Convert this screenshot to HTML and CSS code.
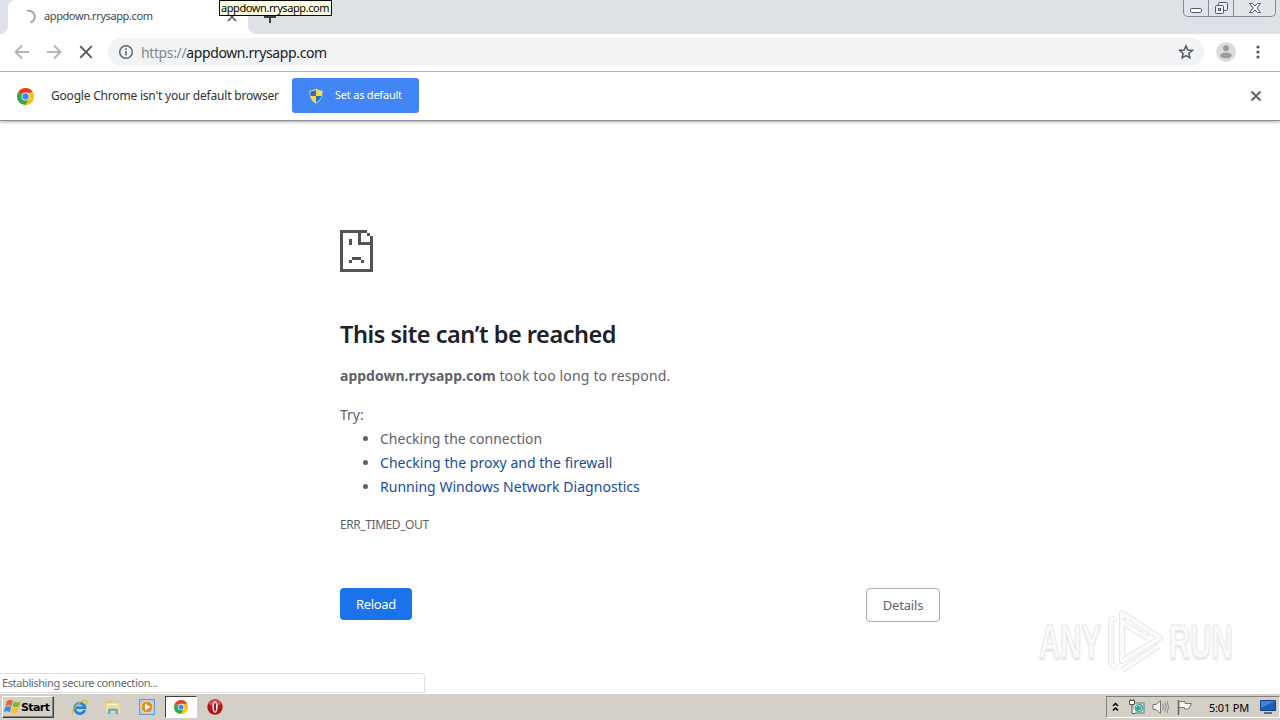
FILE: index.html
```
<!DOCTYPE html>
<html lang="en">
<head>
<meta charset="utf-8">
<title>appdown.rrysapp.com</title>
<link rel="stylesheet" href="styles.css">
</head>
<body>
<svg class="defs" width="0" height="0">
	<symbol id="chrome" viewBox="0 0 16 16">
		<circle cx="8" cy="8" r="8" fill="#fbc116"/>
		<path d="M8 8L1.1 4A8 8 0 0 1 14.9 4z" fill="#e33b2e"/>
		<path d="M1.1 4A8 8 0 0 0 8 16L11.4 10L8 8z" fill="#2da94f"/>
		<path d="M8 4.2H15A8 8 0 0 1 8 16L11.4 9.8z" fill="#fbc116"/>
		<circle cx="8" cy="8" r="3.7" fill="#fff"/>
		<circle cx="8" cy="8" r="3" fill="#4286f5"/>
	</symbol>
</svg>

<div class="browser">
	<div class="tabstrip">
		<div class="edge"></div>
		<div class="tab">
			<svg class="spinner" width="16" height="16" viewBox="0 0 16 16"><path d="M7 2A6 6 0 0 1 10.5 13.5" fill="none" stroke="#a4a7ab" stroke-width="2"/></svg>
			<span class="tab-title">appdown.rrysapp.com</span>
			<svg class="tab-close" width="10" height="10" viewBox="0 0 10 10"><path d="M1 1l8 8M9 1l-8 8" stroke="#5f6368" stroke-width="1.7"/></svg>
		</div>
		<div class="newtab"><svg width="12" height="12" viewBox="0 0 12 12"><path d="M6 0v12M0 6h12" stroke="#3c4043" stroke-width="2"/></svg></div>
		<div class="wincontrols">
			<span class="wbtn min"><svg width="14" height="14" viewBox="0 0 14 14"><rect x="1.5" y="7.5" width="11" height="4" rx="1" fill="#fff" stroke="#535666"/></svg></span>
			<span class="wbtn max"><svg width="14" height="14" viewBox="0 0 14 14"><g fill="#eff0f3" stroke="#535666"><rect x="4.500" y="1.500" width="9" height="8" rx="1"/><rect x="1.500" y="4.500" width="8" height="8" rx="1"/><rect x="4.500" y="7.500" width="2" height="2"/></g></svg></span>
			<span class="wbtn close"><svg width="14" height="14" viewBox="0 0 14 14"><path d="M1.500 2.500h3l2.500 2.500 2.500-2.500h3L9 7l3.500 4.500h-3L7 9l-2.500 2.500h-3L5 7z" fill="#fff" stroke="#535666"/></svg></span>
		</div>
		<div class="tooltip">appdown.rrysapp.com</div>
	</div>

	<div class="toolbar">
		<svg width="16" height="16" viewBox="0 0 16 16"><path d="M15 8H2M8 1.500L1.500 8L8 14.500" fill="none" stroke="#b3b5b7" stroke-width="1.900"/></svg>
		<svg width="16" height="16" viewBox="0 0 16 16"><path d="M1 8h13M8 1.500L14.500 8L8 14.500" fill="none" stroke="#b3b5b7" stroke-width="1.900"/></svg>
		<svg width="16" height="16" viewBox="0 0 16 16"><path d="M2.200 2.200l11.600 11.600M13.800 2.200L2.200 13.800" stroke="#55585c" stroke-width="1.900"/></svg>
		<div class="omnibox">
			<svg width="16" height="16" viewBox="0 0 16 16"><circle cx="8" cy="8" r="6.300" fill="none" stroke="#5f6368" stroke-width="1.500"/><path d="M8 7v4.500M8 4.300v1.700" stroke="#5f6368" stroke-width="1.600"/></svg>
			<span class="url"><i>https://</i>appdown.rrysapp.com</span>
			<svg class="star" width="16" height="16" viewBox="0 0 16 16"><path d="M8 1.900l1.750 4.150 4.500.4-3.400 2.950 1 4.400L8 11.500l-3.850 2.300 1-4.400-3.400-2.950 4.500-.4z" fill="none" stroke="#55585c" stroke-width="1.500"/></svg>
		</div>
		<svg class="avatar" width="20" height="20" viewBox="0 0 20 20"><circle cx="10" cy="10" r="10" fill="#dcdcdc"/><circle cx="10" cy="6.300" r="3" fill="#9c9c9c"/><ellipse cx="10" cy="13.500" rx="5.800" ry="2.900" fill="#9c9c9c"/></svg>
		<svg class="dots" width="4" height="16" viewBox="0 0 4 16"><g fill="#55585c"><circle cx="2" cy="3" r="1.600"/><circle cx="2" cy="8" r="1.600"/><circle cx="2" cy="13" r="1.600"/></g></svg>
	</div>

	<div class="infobar">
		<svg width="17" height="17"><use href="#chrome"/></svg>
		<span class="info-text">Google Chrome isn't your default browser</span>
		<div class="setdefault">
			<svg width="14" height="16" viewBox="0 0 14 16"><path d="M7 .5C9 2 11 2.500 13.500 2.500C13.700 8.500 12 13 7 15.500C2 13 .3 8.500.5 2.500C3 2.500 5 2 7 .5z" fill="#d9d9bd"/><path d="M7 1.800V8H1.600C1.300 6.500 1.300 5 1.400 3.500C3.500 3.400 5.500 3 7 1.800z" fill="#2474bd"/><path d="M7 1.800V8h5.400c.3-1.500.3-3 .2-4.500C10.500 3.400 8.500 3 7 1.800z" fill="#fcd936"/><path d="M7 8H1.600C2.300 11 4 13 7 14.500z" fill="#fcd936"/><path d="M7 8h5.400C11.700 11 10 13 7 14.500z" fill="#2474bd"/></svg>
			<span>Set as default</span>
		</div>
		<svg class="info-close" width="12" height="12" viewBox="0 0 12 12"><path d="M1.500 1.500l9 9M10.500 1.500l-9 9" stroke="#666" stroke-width="2.200"/></svg>
	</div>

	<div class="page">
		<div class="error">
			<svg class="sad" width="33" height="42" viewBox="0 0 33 42" shape-rendering="crispEdges"><path d="M0 0H27V3H3V39H30V15H18V3H21V12H30V6H33V42H0zM27 3H30V6H27zM9 9H12V15H9zM9 30H12V33H9zM12 27H21V30H12zM21 30H24V33H21z" fill="#535353"/></svg>
			<h1>This site can’t be reached</h1>
			<p class="summary"><strong>appdown.rrysapp.com</strong> took too long to respond.</p>
			<p class="try">Try:</p>
			<ul>
				<li>Checking the connection</li>
				<li><a>Checking the proxy and the firewall</a></li>
				<li><a>Running Windows Network Diagnostics</a></li>
			</ul>
			<div class="code">ERR_TIMED_OUT</div>
			<div class="buttons">
				<div class="reload">Reload</div>
				<div class="details">Details</div>
			</div>
		</div>
		<div class="status">Establishing secure connection...</div>
		<div class="watermark">
			<span class="wm-any">ANY</span>
			<svg width="60" height="66" viewBox="0 0 60 66"><g fill="none" stroke-linejoin="round"><path d="M12 10L6 12V56L12 60M17 5L55 30L17 53zM18 15L44 31M17 62L54 38" stroke="#e6e6e6" stroke-width="6"/><path d="M12 10L6 12V56L12 60M17 5L55 30L17 53zM18 15L44 31M17 62L54 38" stroke="#fafafa" stroke-width="4"/></g></svg>
			<span class="wm-run">RUN</span>
		</div>
	</div>
</div>

<div class="taskbar">
	<div class="start">
		<svg width="17" height="16" viewBox="0 0 17 16"><path d="M3 2Q6 0 9 2L7.500 7Q5 5.500 1.500 7z" fill="#e8642b"/><path d="M10 2.500Q13 4 16.500 2.500L15 7.500Q12 9 8.500 7.500z" fill="#7cb63c"/><path d="M1.200 8Q4.500 6.500 7.200 8L5.800 13Q3 11.500 0 13z" fill="#3f8bd4"/><path d="M8.200 8.500Q11.500 10 14.700 8.500L13.300 13.500Q10 15 6.800 13.500z" fill="#f6c12c"/></svg>
		<b>Start</b>
	</div>
	<div class="launch">
		<svg width="17" height="17" viewBox="0 0 17 17"><path d="M13.800 11A5.200 5.200 0 1 1 14 8.700H5" fill="none" stroke="#2287d4" stroke-width="2.800"/><path d="M2 15.500C-1 13 7 2 14.500 1.300C17 1.400 16 4 15 5.500" fill="none" stroke="#e6b632" stroke-width="1.200"/></svg>
	</div>
	<div class="launch">
		<svg width="16" height="16" viewBox="0 0 16 16"><path d="M1 2h5l1 1.500h7V13H1z" fill="#e9c661"/><path d="M2 4.500h11v3H2z" fill="#fff6c9"/><path d="M1 6h14v8H1z" fill="#f5de88"/><path d="M3 15V11Q3 9.500 5 9.500h6q2 0 2 1.500v4h-2.500v-3h-5v3z" fill="#5aaedd"/></svg>
	</div>
	<div class="launch">
		<svg width="16" height="16" viewBox="0 0 16 16"><rect x=".5" y=".5" width="15" height="15" fill="#a9cfee" stroke="#5c9fd2"/><circle cx="8" cy="8" r="6" fill="#f08a1d" stroke="#fbe0b0"/><path d="M6 4.500L11.500 8L6 11.500z" fill="#fff"/></svg>
	</div>
	<div class="launch active"><svg width="14" height="14"><use href="#chrome"/></svg></div>
	<div class="launch">
		<svg width="16" height="16" viewBox="0 0 16 16"><circle cx="8" cy="8" r="7.700" fill="#b3151b"/><path d="M1.500 5A7 7 0 0 1 14.500 5Q8 9 1.500 5z" fill="#d94b4d"/><ellipse cx="8" cy="8" rx="2.700" ry="5.700" fill="#f7eeee"/><ellipse cx="8" cy="8" rx="1" ry="4.500" fill="#9a1117"/></svg>
	</div>
	<div class="tray">
		<svg width="7" height="10" viewBox="0 0 7 10"><path d="M1 4l2.500-2.500L6 4M1 8.500L3.500 6L6 8.500" fill="none" stroke="#000" stroke-width="1.500"/></svg>
		<svg class="net" width="17" height="16" viewBox="0 0 17 16"><rect x="5" y="4" width="11" height="10" fill="#d9eef0" stroke="#557b80"/><circle cx="11" cy="9" r="4.300" fill="#36a79c"/><path d="M8 8q3-4 5 0t-3 4" fill="none" stroke="#b9e3ca"/><path d="M1.500 1.500h5v4h-5zM4 5.500v9h3M2.500 0v2M5.500 0v2" fill="#fff" stroke="#555"/></svg>
		<svg class="vol" width="17" height="16" viewBox="0 0 17 16"><path d="M1 5.500h3L8.500 1.500v13L4 10.500H1z" fill="#f4f4f4" stroke="#777"/><path d="M10.500 5q2 3 0 6M12.700 3.500q3 4.500 0 9M15 2q3 6 0 12" fill="none" stroke="#888"/></svg>
		<svg class="flag" width="17" height="16" viewBox="0 0 17 16"><path d="M2.500 1v15" stroke="#666" stroke-width="1.500"/><path d="M3 2.500h6v2h6.500L12.500 10H8.500V8.500H3z" fill="#fbfbfb" stroke="#777"/></svg>
		<span class="clock">5:01 PM</span>
		<svg class="desk" width="16" height="14" viewBox="0 0 16 14"><path d="M.5.5h15v10H.5z" fill="#195fb5" stroke="#173e83"/><path d="M1 1h14L1 8z" fill="#3a85d5"/><path d="M4 13h8" stroke="#3c4c63" stroke-width="1.500"/></svg>
	</div>
</div>
</body>
</html>
```

FILE: styles.css
```
*{ margin:0; padding:0; box-sizing:border-box;}
body{ width:1280px; height:720px; overflow:hidden; display:flex; flex-direction:column; background:#fff; font-family:"Noto Sans","Open Sans",sans-serif; white-space:nowrap;}
svg{ display:block; flex:none;}
.defs{ position:absolute;}
.browser{ height:693px; display:flex; flex-direction:column;}

.tabstrip{ height:34px; background:linear-gradient(90deg,#fff 260px,#dee1e6 260px); display:flex; position:relative;}
.edge{ width:8px; background:#dee1e6; border-bottom-right-radius:8px;}
.tab{ width:240px; background:linear-gradient(#fff,#fff); border-radius:8px 8px 0 0; box-shadow:0 -8px 0 #dee1e6; display:flex; align-items:center; padding:0 11px 0 12px;}
.tab-title{ font-size:11px; line-height:14px; letter-spacing:-0.4px; color:#45484c; margin:-2px 0 0 8px; flex:1;}
.newtab{ width:40px; padding:11px 0 0 16px; background:#dee1e6; border-bottom-left-radius:8px;}
.wincontrols{ margin-left:auto; margin-right:4px; width:93px; height:17px; border:1px solid #848996; border-top:0; border-radius:0 0 5px 5px; display:flex; background:#e1e4e9;}
.wbtn{ display:flex; justify-content:center; align-items:center; border-right:1px solid #848996;}
.min{ width:25px;}
.max{ width:25px;}
.close{ flex:1; border:0;}
.tooltip{ position:absolute; left:219px; top:0; width:113px; height:16px; border:1px solid #000; background:#ffffe1; font-size:11px; line-height:14px; letter-spacing:-0.42px; padding-left:1px; color:#000;}

.toolbar{ height:38px; border-bottom:1px solid #b5b5b5; display:flex; align-items:center; padding:0 20px 1px 14px; gap:16px;}
.omnibox{ width:1096px; height:28px; margin-left:-2px; border-radius:14px; background:#f1f3f4; display:flex; align-items:center; padding:0 10px;}
.url{ font-size:14px; letter-spacing:-0.38px; color:#202124; margin-left:7px; flex:1;}
.url i{ font-style:normal; color:#84888c;}
.avatar{ margin-left:-4px;}
.dots{ margin-left:4px;}

.infobar{ height:49px; border-bottom:1px solid #8e8e8e; box-shadow:0 1px 3px #aaa; display:flex; align-items:center; padding:0 18px 0 17px;}
.info-text{ width:241px; margin:-2px 0 0 17px; font-size:12px; letter-spacing:-0.2px; color:#303134;}
.setdefault{ width:127px; height:35px; margin-top:-1px; border-radius:3px; background:#4285f4; color:#fff; display:flex; align-items:center; padding-left:17px; font-size:11px; letter-spacing:-0.22px;}
.setdefault span{ margin:-2px 0 0 12px;}
.info-close{ margin-left:auto;}

.page{ flex:1; position:relative;}
.error{ width:600px; margin:0 auto; padding-top:109px; color:#5f6368; font-size:14px; line-height:24px;}
.error h1{ margin-top:46px; font-size:23.5px; line-height:32px; letter-spacing:-0.46px; font-weight:600; color:#202124;}
.summary{ margin-top:14px; letter-spacing:0.16px;}
.summary strong{ letter-spacing:0;}
.try{ margin-top:15px;}
.error ul{ padding-left:40px;}
.error a{ color:#1a4ba0; letter-spacing:0.03px;}
.code{ margin-top:14px; font-size:12px; letter-spacing:-0.42px;}
.buttons{ margin-top:51px; display:flex; justify-content:space-between;}
.reload{ width:72px; height:32px; border-radius:4px; background:#1a73e8; color:#fff; font-size:13px; letter-spacing:-0.3px; line-height:32px; text-align:center;}
.details{ width:74px; height:34px; border-radius:4px; border:1px solid #a9acb0; font-size:13px; letter-spacing:-0.2px; line-height:32px; text-align:center;}
.status{ position:absolute; left:0; bottom:0; width:425px; height:20px; border:1px solid #ddd; border-left:0; border-radius:0 4px 0 0; background:#fff; padding-left:2px; font-size:11px; letter-spacing:-0.38px; line-height:18px; color:#66696d;}
.watermark{ position:absolute; left:1039px; top:487px; display:flex; align-items:center; font-family:"Liberation Sans",sans-serif;}
.watermark span{ font-size:49px; font-weight:bold; line-height:66px; color:#fafafa; -webkit-text-stroke:1px #e9e9e9; width:66px; transform:scaleX(.6); transform-origin:0 50%; text-shadow:0 2px 3px #ddd;}
.watermark svg{ margin-right:4px;}

.taskbar{ height:27px; background:#d4d0c8; box-shadow:inset 0 1px #fff; display:flex; align-items:center; padding:1px 0 0 2px;}
.start{ width:52px; height:22px; border:1px solid; border-color:#fff #404040 #404040 #fff; box-shadow:inset -1px -1px #808080; display:flex; align-items:center; padding-left:1px; margin-right:8px; font-family:"DejaVu Sans",sans-serif; color:#000;}
.start b{ font-size:11px; letter-spacing:-0.6px;}
.launch{ width:34px; height:22px; display:flex; align-items:center; justify-content:center;}
.active{ width:32px; margin:0 1px; background:#fff; border:1px solid; border-color:#404040 #fff #fff #404040;}
.tray{ width:174px; height:22px; margin-left:auto; border:1px solid; border-color:#808080 #fff #fff #808080; display:flex; align-items:center; padding-left:5px; font-size:11px; color:#000;}
.net{ margin-left:9px;}
.vol{ margin-left:7px;}
.flag{ margin-left:7px;}
.clock{ margin-left:16px; width:51px; letter-spacing:-0.2px;}
```
